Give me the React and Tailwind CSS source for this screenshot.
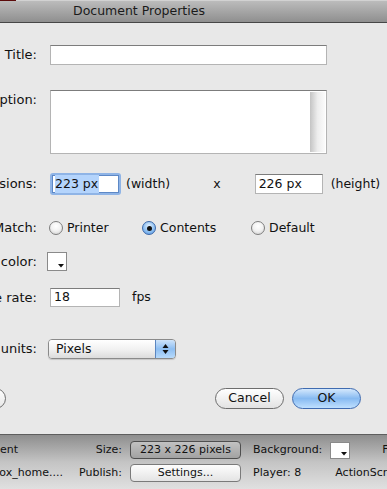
import React from 'react';

const font = { fontFamily: '"DejaVu Sans", "Liberation Sans", sans-serif' };

const Label = ({ children, top }) => (
    <div className={`w-[37px] shrink-0 flex justify-end overflow-hidden ${top ? 'self-start' : ''}`}>
        <span className="whitespace-nowrap shrink-0 text-[13px] text-[#111]">{children}</span>
    </div>
);

const Field = ({ className = '', children }) => (
    <div className={`bg-white border border-[#b4b4b4] border-t-[#7c7c7c] flex items-center pl-[3px] text-[12.5px] text-[#111] ${className}`}>
        {children}
    </div>
);

const Radio = ({ checked }) => (
    checked ? (
        <div className="w-[14px] h-[14px] rounded-full border border-[#3b67a8] bg-[radial-gradient(circle_at_50%_35%,#e4f1fd_0%,#8fc0f1_55%,#4d8fe0_100%)] flex items-center justify-center shrink-0">
            <div className="w-[5px] h-[5px] rounded-full bg-[#111]" />
        </div>
    ) : (
        <div className="w-[14px] h-[14px] rounded-full border border-[#7e7e7e] bg-[radial-gradient(circle_at_50%_35%,#ffffff_0%,#f1f1f1_50%,#c9c9c9_100%)] shrink-0" />
    )
);

const Swatch = ({ className = '' }) => (
    <div className={`relative bg-white border border-[#8a8a8a] ${className}`}>
        <svg className="absolute right-[2px] bottom-[2px]" width="6" height="4" viewBox="0 0 6 4">
            <path d="M0 0 H6 L3 3.5 Z" fill="#111" />
        </svg>
    </div>
);

export default function App() {
    return (
        <div className="w-[387px] h-[489px] overflow-hidden bg-[#e8e8e8] flex flex-col" style={font}>
            {/* title bar */}
            <div className="h-[23px] shrink-0 flex flex-col">
                <div className="h-[1px] flex">
                    <div className="w-[16px] bg-[#5c0b0b]" />
                    <div className="flex-1 bg-[#d2d2d2]" />
                </div>
                <div className="flex-1 bg-gradient-to-b from-[#bcbcbc] to-[#8f8f8f] flex items-center pl-[73px]">
                    <span className="text-[12.5px] text-[#1a1a1a]">Document Properties</span>
                </div>
                <div className="h-[1px] bg-[#474747]" />
            </div>

            {/* body */}
            <div className="flex flex-col pt-[22px]">
                <div className="flex items-center h-[20px]">
                    <Label>Title:</Label>
                    <Field className="ml-[13px] w-[277px] h-[20px]" />
                </div>

                <div className="flex mt-[25px]">
                    <Label top>Description:</Label>
                    <div className="ml-[13px] w-[277px] h-[64px] bg-white border border-[#b4b4b4] border-t-[#7c7c7c] flex justify-end p-[1px]">
                        <div className="w-[15px] h-full bg-gradient-to-r from-[#c4c4c4] via-[#ededed] to-[#fbfbfb]" />
                    </div>
                </div>

                <div className="flex items-center mt-[19px] h-[22px]">
                    <Label>Dimensions:</Label>
                    <div className="ml-[13px] w-[71px] h-[22px] rounded-[3px] bg-[#8fb4e6] p-[2px]">
                        <div className="w-full h-full bg-white border border-[#5d88c6] flex items-center pl-[2px] text-[12.5px] text-[#111]">
                            <span className="bg-[#b4d4fc] pr-[1px]">223 px</span>
                        </div>
                    </div>
                    <span className="ml-[5px] text-[12.5px] text-[#111]">(width)</span>
                    <span className="ml-[43px] text-[12.5px] text-[#111]">x</span>
                    <Field className="ml-[34px] w-[68px] h-[20px]">226 px</Field>
                    <span className="ml-[8px] text-[12.5px] text-[#111] whitespace-nowrap">(height)</span>
                </div>

                <div className="flex items-center mt-[25px] h-[16px]">
                    <Label>Match:</Label>
                    <div className="ml-[12px] w-[93px] flex items-center gap-[4px]">
                        <Radio />
                        <span className="text-[12.5px] text-[#111]">Printer</span>
                    </div>
                    <div className="w-[109px] flex items-center gap-[4px]">
                        <Radio checked />
                        <span className="text-[12.5px] text-[#111]">Contents</span>
                    </div>
                    <div className="flex items-center gap-[4px]">
                        <Radio />
                        <span className="text-[12.5px] text-[#111]">Default</span>
                    </div>
                </div>

                <div className="flex items-center mt-[16px] h-[19px]">
                    <Label>Background color:</Label>
                    <Swatch className="ml-[10px] w-[20px] h-[19px]" />
                </div>

                <div className="flex items-center mt-[17px] h-[19px]">
                    <Label>Frame rate:</Label>
                    <Field className="ml-[13px] w-[70px] h-[19px]">18</Field>
                    <span className="ml-[12px] text-[12.5px] text-[#111]">fps</span>
                </div>

                <div className="flex items-center mt-[32px] h-[20px]">
                    <Label>Ruler units:</Label>
                    <div className="ml-[11px] w-[128px] h-[20px] rounded-[4px] border border-[#8a8a8a] overflow-hidden flex shadow-[0_1px_1px_rgba(0,0,0,0.15)]">
                        <div className="flex-1 bg-gradient-to-b from-[#ffffff] via-[#f2f2f2] to-[#dcdcdc] flex items-center pl-[7px] text-[12.5px] text-[#111]">Pixels</div>
                        <div className="w-[20px] border-l border-[#5b86c0] bg-gradient-to-b from-[#cfe4fa] via-[#8dbef2] to-[#b7dafb] flex items-center justify-center">
                            <svg width="7" height="12" viewBox="0 0 7 12">
                                <path d="M3.5 1 L6.5 5 H0.5 Z" fill="#111" />
                                <path d="M0.5 7 H6.5 L3.5 11 Z" fill="#111" />
                            </svg>
                        </div>
                    </div>
                </div>

                <div className="flex items-center mt-[29px] h-[21px]">
                    <div className="ml-[-60px] w-[66px] h-[21px] rounded-full border border-[#6d6d6d] bg-gradient-to-b from-[#ffffff] to-[#e6e6e6]" />
                    <div className="ml-auto w-[69px] h-[21px] rounded-full border border-[#6d6d6d] bg-gradient-to-b from-[#ffffff] via-[#f1f1f1] to-[#e2e2e2] flex items-center justify-center text-[12.5px] text-[#111]">Cancel</div>
                    <div className="ml-[8px] mr-[26px] w-[69px] h-[21px] rounded-full border border-[#3f6bb0] bg-gradient-to-b from-[#d4e8fc] via-[#87baf1] to-[#bfe0ff] flex items-center justify-center text-[12.5px] text-[#111]">OK</div>
                </div>
            </div>

            {/* property inspector strip */}
            <div className="mt-auto h-[55px] shrink-0 border-t border-[#5e5e5e] bg-gradient-to-b from-[#8e8e8e] via-[#c4c4c4] to-[#e0e0e0] flex pt-[6px] text-[11px] text-[#111] whitespace-nowrap">
                <div className="w-[70px] shrink-0 overflow-hidden flex flex-col">
                    <div className="h-[18px] flex items-center"><span className="ml-[-39px]">Document</span></div>
                    <div className="h-[18px] mt-[5px] flex items-center"><span className="ml-[-34px]">flashbox_home....</span></div>
                </div>
                <div className="w-[52px] shrink-0 flex flex-col items-end">
                    <div className="h-[18px] flex items-center">Size:</div>
                    <div className="h-[18px] mt-[5px] flex items-center">Publish:</div>
                </div>
                <div className="ml-[8px] w-[111px] shrink-0 flex flex-col">
                    <div className="h-[18px] rounded-[4px] border border-[#4f4f4f] bg-gradient-to-b from-[#c2c2c2] to-[#a2a2a2] flex items-center justify-center">223 x 226 pixels</div>
                    <div className="h-[18px] mt-[5px] rounded-[4px] border border-[#7a7a7a] bg-gradient-to-b from-[#fdfdfd] to-[#e4e4e4] flex items-center justify-center">Settings...</div>
                </div>
                <div className="ml-[12px] flex flex-col">
                    <div className="h-[18px] flex items-center">
                        <span>Background:</span>
                        <Swatch className="ml-[8px] w-[20px] h-[17px] bg-[#e4e4e4]" />
                        <span className="ml-[32px]">Frame rate:</span>
                    </div>
                    <div className="h-[18px] mt-[5px] flex items-center">
                        <span>Player: 8</span>
                        <span className="ml-[34px]">ActionScript: 2</span>
                    </div>
                </div>
            </div>
        </div>
    );
}
